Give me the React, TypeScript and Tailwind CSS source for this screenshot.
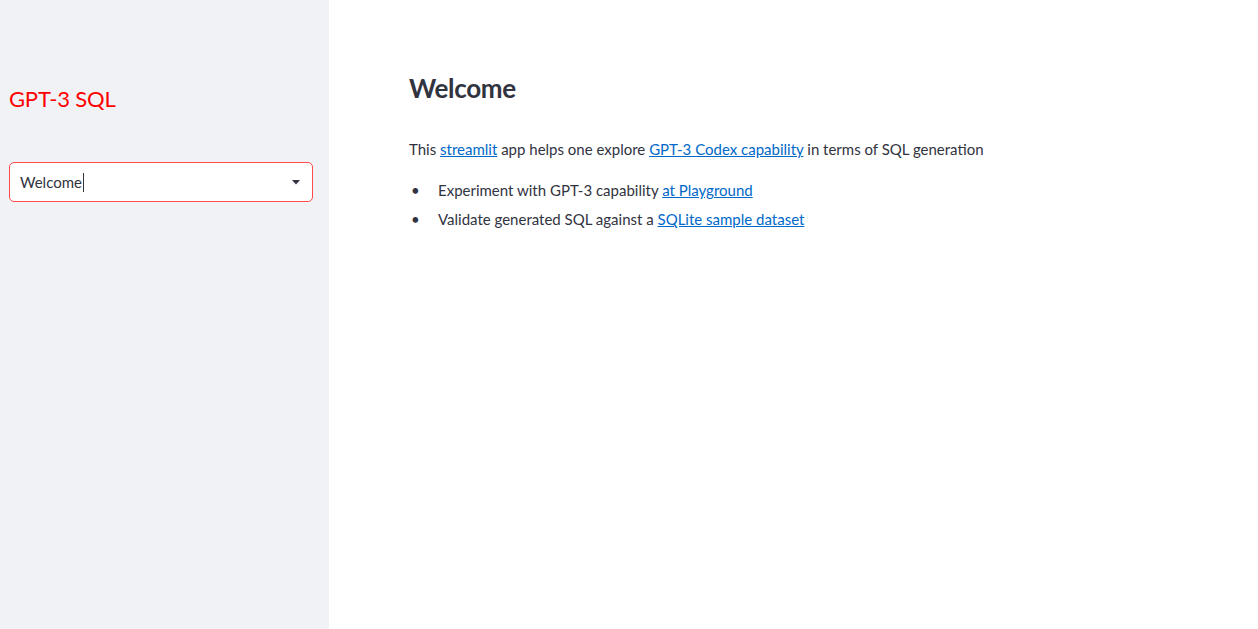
import React from "react";

export default function App() {
  const font = { fontFamily: "Lato, 'Noto Sans', sans-serif" };
  return (
    <div className="flex h-[629px] w-full bg-white text-[#31333f]" style={font}>
      <aside className="w-[329px] shrink-0 bg-[#f0f2f6] pl-[9px] pr-[16px] pt-[84px]">
        <h2 className="text-[22px] leading-[30px] text-[#ff0000] tracking-[-0.2px]">GPT-3 SQL</h2>
        <div className="mt-[48px] flex h-[40px] items-center justify-between rounded-[5px] border border-[#ff4b4b] bg-white pl-[10px] pr-[12px]">
          <div className="flex items-center text-[15px] text-[#31333f]">
            <span>Welcome</span>
            <span className="ml-[1px] inline-block h-[19px] w-[1px] bg-[#31333f]" />
          </div>
          <svg width="8" height="5" viewBox="0 0 8 5">
            <path d="M0 0 L8 0 L4 4.5 Z" fill="#31333f" />
          </svg>
        </div>
      </aside>
      <main className="flex-1 pl-[80px] pt-[70px]">
        <h1 className="text-[26px] font-bold leading-[36px] tracking-[-0.3px]">Welcome</h1>
        <p className="mt-[31px] text-[15px] leading-[24px]">
          This <a className="text-[#0068c9] underline" href="#">streamlit</a> app helps one explore{" "}
          <a className="text-[#0068c9] underline" href="#">GPT-3 Codex capability</a> in terms of SQL generation
        </p>
        <ul className="mt-[17px] text-[15px] leading-[24px]">
          <li className="flex items-center">
            <span className="w-[29px] pl-[2px] text-[15px]">•</span>
            <span>
              Experiment with GPT-3 capability <a className="text-[#0068c9] underline" href="#">at Playground</a>
            </span>
          </li>
          <li className="mt-[5px] flex items-center">
            <span className="w-[29px] pl-[2px] text-[15px]">•</span>
            <span>
              Validate generated SQL against a <a className="text-[#0068c9] underline" href="#">SQLite sample dataset</a>
            </span>
          </li>
        </ul>
      </main>
    </div>
  );
}
